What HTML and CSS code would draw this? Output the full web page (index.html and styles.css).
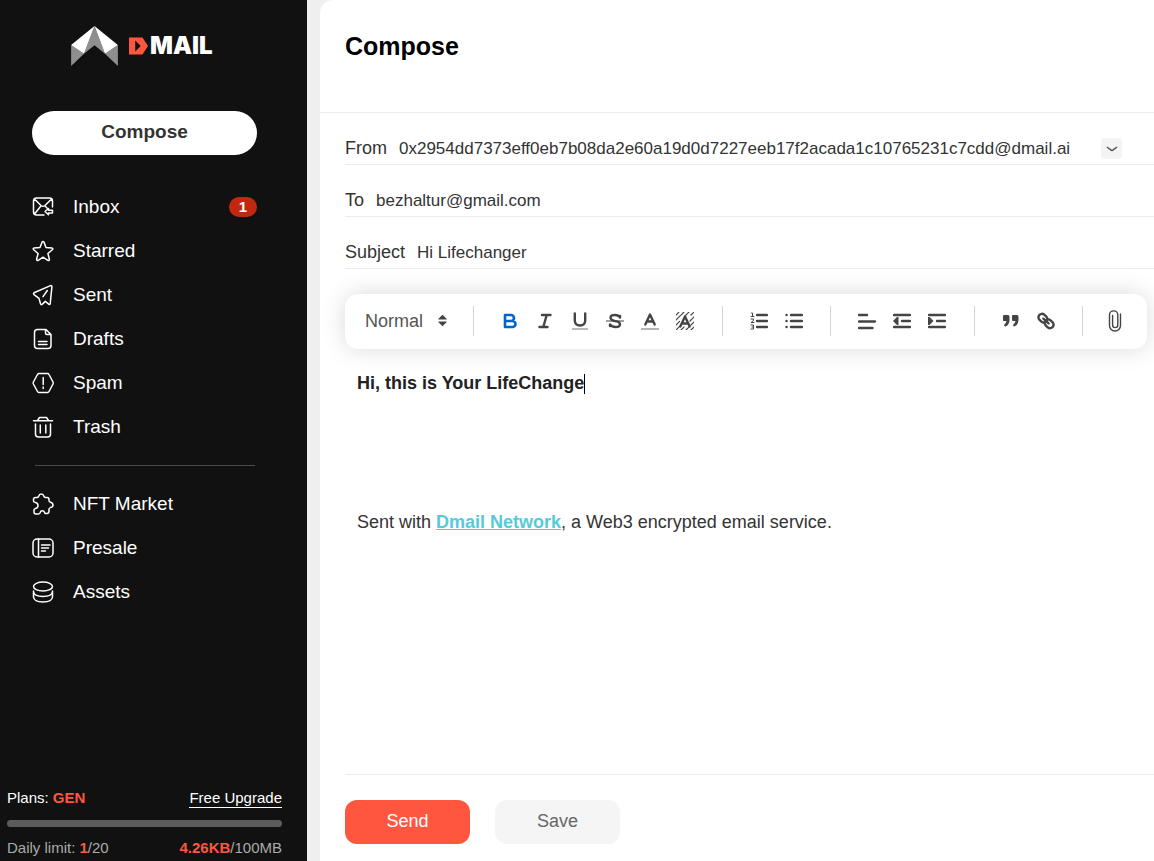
FILE: index.html
```html
<!DOCTYPE html>
<html lang="en">
<head>
<meta charset="utf-8">
<meta name="viewport" content="width=device-width, initial-scale=1">
<title>Dmail - Compose</title>
<link rel="stylesheet" href="styles.css">
</head>
<body>
<div class="app">
  <aside class="sidebar">
    <a class="logo" href="#" aria-label="Dmail home">
      <svg class="logo-mark" viewBox="0 0 138 118" aria-hidden="true">
        <path fill="#8f8f8f" d="M0 56V118L38 82ZM138 56V118L100 82ZM69 0L100 82L69 57L38 82Z"/>
        <path fill="#fff" d="M0 56L69 0L38 82ZM138 56L69 0L100 82Z"/>
      </svg>
      <svg class="logo-d" viewBox="0 0 58 52" aria-hidden="true">
        <path fill="#ff563f" fill-rule="evenodd" d="M0 0H41L58 26L41 52H0ZM19 9V43L36 26Z"/>
      </svg>
      <span class="logo-text">MAIL</span>
    </a>
    <button class="compose-btn" type="button">Compose</button>
    <nav class="nav">
      <a class="nav-item" href="#">
        <svg class="nav-icon" viewBox="0 0 22 22"><path d="M12 19H4.500Q1.500 19 1.500 16V5Q1.500 2 4.500 2H17.500Q20.500 2 20.500 5V11M2.500 3L9 9.500Q11 11 13 9.500L19.500 3M2.500 18L8.500 10.500M13.500 10.500L15 12M13 15.500L16.500 12.500V14.300H20.500V17H16.500V18.800Z"/></svg>
        <span class="nav-label">Inbox</span><span class="badge">1</span>
      </a>
      <a class="nav-item" href="#">
        <svg class="nav-icon" viewBox="0 0 22 22"><path d="M10 2.200Q11 .6 12 2.200L14 7.600L19.800 8Q21.600 8.400 20.300 9.800L15.900 13.500L17.400 19.200Q17.400 21 15.800 20.300L11 17.200L6.200 20.300Q4.600 21 4.600 19.200L6.100 13.500L1.700 9.800Q.4 8.400 2.200 8L8 7.600Z"/></svg>
        <span class="nav-label">Starred</span>
      </a>
      <a class="nav-item" href="#">
        <svg class="nav-icon" viewBox="0 0 22 22"><path d="M2 8.800L18.500 1.600Q20 1.200 19.900 2.800L18.200 19.600Q17.900 21 16.700 20.100L13.300 17.400L10.100 20.400Q8.900 21.200 8.500 19.800L7 14.400L2 10.600Q1 9.500 2 8.800ZM15.300 6.500L11 12.600"/></svg>
        <span class="nav-label">Sent</span>
      </a>
      <a class="nav-item" href="#">
        <svg class="nav-icon" viewBox="0 0 22 22"><path d="M5.500 1.500H14L19 6.500V17.500Q19 20.500 16 20.500H5.500Q2.500 20.500 2.500 17.500V4.500Q2.500 1.500 5.500 1.500ZM13.500 1.500V5Q13.500 6.500 15 6.500H19M6.500 13.500H15M6.500 16.500H15"/></svg>
        <span class="nav-label">Drafts</span>
      </a>
      <a class="nav-item" href="#">
        <svg class="nav-icon" viewBox="0 0 22 22"><path d="M7 1.500H15.500Q16.500 1.500 17 2.500L21 10Q21.400 11 21 12L17 19.500Q16.500 20.500 15.500 20.500H7Q6 20.500 5.500 19.500L1.400 12Q1 11 1.400 10L5.500 2.500Q6 1.500 7 1.500ZM11.200 5.500V12.500M11.200 15V16.500"/></svg>
        <span class="nav-label">Spam</span>
      </a>
      <a class="nav-item" href="#">
        <svg class="nav-icon" viewBox="0 0 22 22"><path d="M1.500 4.800H20.500M5.500 4.500L7.500 1.500H14.500L16.500 4.500M3.500 8V18Q3.500 21 6.500 21H15.500Q18.500 21 18.500 18V8M8.300 9V17M13.800 9V17"/></svg>
        <span class="nav-label">Trash</span>
      </a>
    </nav>
    <hr class="nav-divider">
    <nav class="nav">
      <a class="nav-item" href="#">
        <svg class="nav-icon" viewBox="0 0 22 22"><path d="M1.500 8V6.500Q1.500 4.500 3.500 4.500H5Q6.500 4.500 6.800 3Q7.300 1 9.300 1Q11.300 1 11.800 3Q12.100 4.500 13.500 4.500H15Q17 4.500 17 6.500V7.500Q17 8.800 18.500 9.200Q21 9.800 21 12Q21 14 18.500 14.600Q17 15 17 16.300V18Q17 20.500 15 20.500H13.500Q12.800 20.500 12.600 19.500Q12 17.800 10.300 17.800Q8.700 17.800 8.200 19.500Q8 21 6.500 21H4Q2 21 2 19V17Q2 16 3.500 15.500Q6 15 6 12.500Q6 10 3.500 9.500Q1.500 9.300 1.500 8Z"/></svg>
        <span class="nav-label">NFT Market</span>
      </a>
      <a class="nav-item" href="#">
        <svg class="nav-icon" viewBox="0 0 22 22"><rect x="1" y="2" width="20" height="18" rx="4"/><path d="M6.500 2V20M9.500 8H18M9.500 11H16.500M9.500 14H13.500"/></svg>
        <span class="nav-label">Presale</span>
      </a>
      <a class="nav-item" href="#">
        <svg class="nav-icon" viewBox="0 0 22 22"><ellipse cx="11" cy="5.500" rx="9.500" ry="4.500"/><path d="M1.500 10.500Q2 15.500 11 15.500Q20 15.500 20.500 10.500M1.500 10V16Q2 21 11 21Q20 21 20.500 16V10"/></svg>
        <span class="nav-label">Assets</span>
      </a>
    </nav>
    <section class="plan">
      <div class="plan-row"><span>Plans: <b>GEN</b></span><a class="upgrade" href="#">Free Upgrade</a></div>
      <div class="plan-bar"></div>
      <div class="plan-row plan-usage"><span>Daily limit: <b>1</b>/20</span><span><b>4.26KB</b>/100MB</span></div>
    </section>
  </aside>

  <main class="main">
    <header class="main-head"><h1 class="title">Compose</h1></header>
    <form class="form">
      <div class="field">
        <span class="field-label">From</span>
        <span class="address">0x2954dd7373eff0eb7b08da2e60a19d0d7227eeb17f2acada1c10765231c7cdd@dmail.ai</span>
        <button class="chevron" type="button" aria-label="Choose sender"><svg viewBox="0 0 12 8"><path d="M1 2Q3 3.500 4.500 4.700Q6 6 7.500 4.700L11 2"/></svg></button>
      </div>
      <div class="field">
        <label class="field-label" for="to">To</label>
        <input class="field-input" id="to" type="text" value="bezhaltur@gmail.com">
      </div>
      <div class="field">
        <label class="field-label" for="subject">Subject</label>
        <input class="field-input" id="subject" type="text" value="Hi Lifechanger">
      </div>

      <div class="toolbar">
        <div class="format">
          <select class="format-select" aria-label="Paragraph style"><option>Normal</option></select>
          <svg class="format-arrows" viewBox="0 0 10 14"><path d="M5 .5L9.500 5Q10 6 9 6H1Q0 6 .5 5ZM5 13.500L9.500 9Q10 8 9 8H1Q0 8 .5 9Z"/></svg>
        </div>
        <div class="tools">
          <button class="tool tool-active" type="button" aria-label="Bold"><svg viewBox="0 0 18 18"><path class="thick" d="M4 3H10A3 3 0 0 1 10 9H4ZM4 9H11.500A3 3 0 0 1 11.500 15H4Z"/></svg></button>
          <button class="tool" type="button" aria-label="Italic"><svg viewBox="0 0 18 18"><path d="M6 3H14.500M3.500 15H11.500M10.700 3L7.300 15"/></svg></button>
          <button class="tool" type="button" aria-label="Underline"><svg viewBox="0 0 18 18"><path d="M3.800 1.500V8.500Q4 13.500 9 13.500Q14 13.500 14.200 8.500V1.500"/><path class="thin" d="M1.500 17H16.500"/></svg></button>
          <button class="tool" type="button" aria-label="Strikethrough"><svg viewBox="0 0 18 18"><path d="M14 5.500V4M14 5.500Q12.500 3 9 3Q4.500 3 4.500 5.500Q4.500 8 9 9Q14 9.800 14 12.300Q14 15 9.500 15Q6 15 4 12.500V14"/><path class="thin dark" d="M.5 9H17.500"/></svg></button>
          <button class="tool" type="button" aria-label="Text color"><svg viewBox="0 0 18 18"><path d="M4.300 12.500L9 2.500L13.700 12.500M5.800 9.500H12.200"/><path class="pale" d="M0 17H18"/></svg></button>
          <button class="tool" type="button" aria-label="Background color"><svg viewBox="0 0 18 18"><path class="hatch" d="M0 3L3 0M0 8L8 0M0 13L3.500 9.500M9 4L13 0M0 18L3.500 14.500M15 3L18 0M14 9L18 5M15 13L18 10M5 18L8 15M10 18L13 15M15 18L18 15"/><path d="M4.300 14.500L9 4.500L13.700 14.500M5.800 11.500H12.200"/></svg></button>
        </div>
        <div class="tools">
          <button class="tool" type="button" aria-label="Numbered list"><svg viewBox="0 0 18 18"><path d="M7 3H17M7 9H17M7 15H17"/><path class="digits" d="M1.500 1H2.500V4.500M1 4.500H4M1 7H3.500V8.500L1 10.500H4M1 13H3.500V17H1M2 15H3.500"/></svg></button>
          <button class="tool" type="button" aria-label="Bulleted list"><svg viewBox="0 0 18 18"><path d="M6 3H17M6 9H17M6 15H17M1.500 3H1.600M1.500 9H1.600M1.500 15H1.600"/></svg></button>
        </div>
        <div class="tools">
          <button class="tool" type="button" aria-label="Align left"><svg viewBox="0 0 18 18"><path d="M1 3H9M1 9.500H17M1 16H14.500"/></svg></button>
          <button class="tool" type="button" aria-label="Outdent"><svg viewBox="0 0 18 18"><path d="M1 3H17M9 9H17M1 15H17"/><path class="solid" d="M5.500 5V13H4L0 9L4 5Z"/></svg></button>
          <button class="tool" type="button" aria-label="Indent"><svg viewBox="0 0 18 18"><path d="M1 3H17M9 9H17M1 15H17"/><path class="solid" d="M0 5V13H1.500L5.500 9L1.500 5Z"/></svg></button>
        </div>
        <div class="tools">
          <button class="tool" type="button" aria-label="Quote"><svg viewBox="0 0 18 18"><path class="solid" d="M2 3H6Q7.500 3 7.500 5V8Q7.500 13 3 14.800L2 13Q4 11.500 4.500 9H2Q1 9 1 8V4Q1 3 2 3ZM11 3H15Q16.500 3 16.500 5V8Q16.500 13 12 14.800L11 13Q13 11.500 13.500 9H11Q10 9 10 8V4Q10 3 11 3Z"/></svg></button>
          <button class="tool" type="button" aria-label="Link"><svg viewBox="0 0 18 18"><g transform="rotate(42 9 9)"><rect x="0" y="5.500" width="9.500" height="7" rx="3.500"/><rect x="8.500" y="5.500" width="9.500" height="7" rx="3.500"/><path d="M5.500 9H12.500"/></g></svg></button>
        </div>
        <div class="attach">
          <button class="tool" type="button" aria-label="Attach file"><svg class="clip" viewBox="0 0 14 22"><path d="M12.500 4V15.500A5.500 5.500 0 0 1 1.500 15.500V5A4 4 0 0 1 9.800 5V15A2.600 2.600 0 0 1 4.600 15V5.500"/></svg></button>
        </div>
      </div>

      <div class="editor" contenteditable="true" role="textbox" aria-multiline="true" aria-label="Message">
        <p class="message">Hi, this is Your LifeChange<span class="caret"></span></p>
        <p class="signature">Sent with <a class="brand-link" href="#">Dmail Network</a>, a Web3 encrypted email service.</p>
      </div>

      <footer class="actions">
        <button class="btn btn-send" type="button">Send</button>
        <button class="btn btn-save" type="button">Save</button>
      </footer>
    </form>
  </main>
</div>
</body>
</html>
```
FILE: styles.css
```css
* { box-sizing: border-box; }

body {
  margin: 0;
  background: #efefef;
  color: #333;
  font-family: "Liberation Sans", Arial, sans-serif;
  font-size: 17px;
}

button, input, select {
  margin: 0;
  padding: 0;
  border: 0;
  background: none;
  color: inherit;
  font: inherit;
}

button { cursor: pointer; }
svg { display: block; fill: none; }

.app { display: flex; gap: 13px; min-height: 100vh; }

/* Sidebar */
.sidebar {
  display: flex;
  flex-direction: column;
  flex: 0 0 307px;
  background: #111;
  color: #fff;
}

.logo {
  display: flex;
  align-items: center;
  margin: 26px 0 45px 71px;
  color: #fff;
  text-decoration: none;
}
.logo-mark { width: 47px; height: 40px; margin-right: 11px; }
.logo-d { width: 19px; height: 18px; margin-right: 2px; }
.logo-text {
  font-family: Inter, sans-serif;
  font-size: 24px;
  font-weight: 900;
  line-height: 40px;
}

.compose-btn {
  height: 44px;
  margin: 0 50px 30px 32px;
  padding-bottom: 2px;
  border-radius: 22px;
  background: #fff;
  color: #333;
  font-size: 19px;
  font-weight: 700;
}

.nav { padding: 0 50px 0 32px; }
.nav-item {
  display: flex;
  align-items: center;
  height: 44px;
  color: #fff;
  font-size: 19px;
  text-decoration: none;
}
.nav-icon {
  width: 22px;
  height: 22px;
  margin-right: 19px;
  stroke: #fff;
  stroke-width: 1.5;
  stroke-linecap: round;
  stroke-linejoin: round;
}
.nav-label { flex: 1; }
.badge {
  width: 28px;
  border-radius: 10px;
  background: #c1280f;
  font-size: 15px;
  font-weight: 700;
  line-height: 20px;
  text-align: center;
}
.nav-divider {
  width: 220px;
  height: 1px;
  margin: 16px 0 16px 35px;
  border: 0;
  background: #4a4a4a;
}

.plan {
  display: grid;
  gap: 12px;
  margin-top: auto;
  padding: 0 25px 4px 7px;
  font-size: 15px;
  line-height: 18px;
}
.plan-row { display: flex; justify-content: space-between; }
.plan-row b { color: #ff563f; }
.plan-usage { color: #aaa; }
.plan-bar { height: 7px; border-radius: 4px; background: #5c5c5c; }
.upgrade { border-bottom: 1px solid #fff; color: #fff; text-decoration: none; }

/* Compose panel */
.main {
  display: flex;
  flex-direction: column;
  flex: 1;
  min-width: 0;
  overflow: hidden;
  border-top-left-radius: 13px;
  background: #fff;
}
.main-head {
  height: 113px;
  padding: 31px 25px 0;
  border-bottom: 1px solid #ececec;
}
.title {
  margin: 0;
  color: #000;
  font-size: 25px;
  line-height: 30px;
}
.form {
  display: flex;
  flex-direction: column;
  flex: 1;
  padding-left: 25px;
}
.field {
  display: flex;
  align-items: center;
  gap: 12px;
  height: 52px;
  padding-top: 20px;
  border-bottom: 1px solid #ececec;
}
.field-label { font-size: 18px; }
.address { min-width: 690px; }
.field-input { flex: 1; min-width: 0; outline: 0; }
.chevron {
  display: grid;
  place-items: center;
  width: 21px;
  height: 21px;
  border-radius: 4px;
  background: #f4f4f4;
}
.chevron svg { width: 12px; height: 8px; stroke: #555; stroke-width: 1.5; }

/* Toolbar */
.toolbar {
  display: flex;
  align-items: center;
  height: 55px;
  margin: 25px 7px 0 0;
  padding-bottom: 2px;
  border-radius: 13px;
  background: #fff;
  box-shadow: 0 0 25px rgba(0, 0, 0, 0.15);
}
.format {
  display: flex;
  align-items: center;
  justify-content: space-between;
  flex: 0 0 128px;
  padding: 0 26px 0 20px;
}
.format-select { appearance: none; outline: 0; color: #555; font-size: 18px; }
.format-arrows { width: 9px; height: 13px; fill: #444; }
.tools, .attach {
  display: flex;
  align-items: center;
  justify-content: center;
  height: 30px;
  border-left: 1px solid #d5d5d5;
}
.tools { flex: 1 0 auto; }
.attach { flex: 0 0 65px; }
.tool {
  display: grid;
  place-items: center;
  width: 35px;
  height: 30px;
  color: #444;
}
.tool-active { color: #06c; }
.tool svg {
  width: 18px;
  height: 18px;
  stroke: currentColor;
  stroke-width: 2.4;
  stroke-linecap: round;
  stroke-linejoin: round;
}
.tool .thick { stroke-width: 2.6; }
.tool .thin { stroke: #777; stroke-width: 1.2; }
.tool .dark { stroke: #444; }
.tool .pale { stroke: #b4b4b4; stroke-width: 2; stroke-linecap: butt; }
.tool .hatch { stroke-width: 1.2; stroke-dasharray: 3 1; }
.tool .digits { stroke-width: 1; }
.tool .solid { fill: currentColor; stroke: none; }
.tool .clip { width: 14px; height: 22px; stroke-width: 1.4; }

/* Message */
.editor { flex: 1; padding: 22px 12px; outline: 0; font-size: 18px; line-height: 24px; }
.message { margin: 0 0 115px; color: #222; font-weight: 700; }
.caret {
  display: inline-block;
  width: 1px;
  height: 20px;
  background: #000;
  vertical-align: middle;
}
.signature { margin: 0; }
.brand-link { color: #56cadb; font-weight: 700; }

.actions {
  display: flex;
  gap: 25px;
  padding: 25px 0 17px;
  border-top: 1px solid #ececec;
}
.btn { width: 125px; height: 44px; padding-bottom: 2px; border-radius: 12px; font-size: 18px; }
.btn-send { background: #ff563f; color: #fff; }
.btn-save { background: #f5f5f5; color: #666; }
```
